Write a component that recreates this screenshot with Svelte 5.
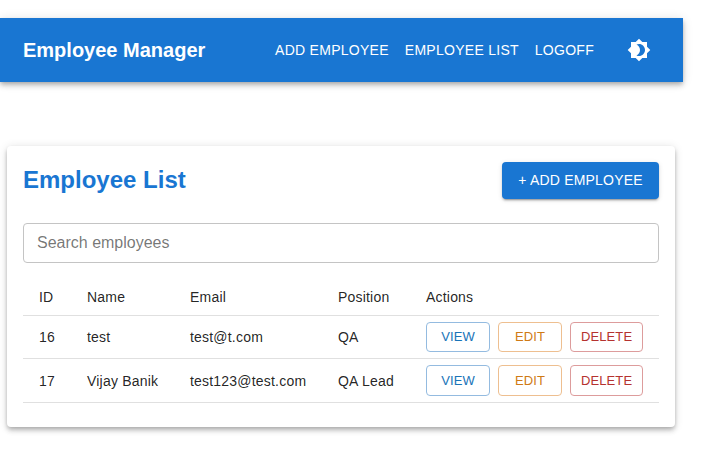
<script lang="ts">
	const employees = [
		{ id: 16, name: 'test', email: 'test@t.com', position: 'QA' },
		{ id: 17, name: 'Vijay Banik', email: 'test123@test.com', position: 'QA Lead' }
	];
	let search = '';
</script>

<div class="page">
	<header class="appbar">
		<div class="brand">Employee Manager</div>
		<nav class="nav">
			<a href="#add">Add Employee</a>
			<a href="#list">Employee List</a>
			<a href="#logoff">Logoff</a>
		</nav>
		<button class="theme" aria-label="Toggle theme">
			<svg viewBox="0 0 24 24" width="24" height="24" fill="currentColor">
				<path d="M20 8.69V4h-4.69L12 .69 8.69 4H4v4.69L.69 12 4 15.31V20h4.69L12 23.31 15.31 20H20v-4.69L23.31 12 20 8.69zM12 18c-.89 0-1.74-.2-2.5-.55C11.56 16.5 13 14.42 13 12s-1.44-4.5-3.5-5.45C10.26 6.2 11.11 6 12 6c3.31 0 6 2.69 6 6s-2.69 6-6 6z" />
			</svg>
		</button>
	</header>

	<main class="card">
		<div class="card-head">
			<h1>Employee List</h1>
			<button class="primary">+ Add Employee</button>
		</div>

		<input class="search" type="text" placeholder="Search employees" bind:value={search} />

		<table>
			<colgroup>
				<col class="c-id" />
				<col class="c-name" />
				<col class="c-email" />
				<col class="c-pos" />
				<col />
			</colgroup>
			<thead>
				<tr>
					<th>ID</th>
					<th>Name</th>
					<th>Email</th>
					<th>Position</th>
					<th>Actions</th>
				</tr>
			</thead>
			<tbody>
				{#each employees as emp}
					<tr>
						<td>{emp.id}</td>
						<td>{emp.name}</td>
						<td>{emp.email}</td>
						<td>{emp.position}</td>
						<td class="actions">
							<div class="action-row">
								<button class="outline view">View</button>
								<button class="outline edit">Edit</button>
								<button class="outline del">Delete</button>
							</div>
						</td>
					</tr>
				{/each}
			</tbody>
		</table>
	</main>
</div>

<style>
	:global(body) {
		margin: 0;
		background: #fff;
		font-family: 'Liberation Sans', Arial, sans-serif;
		color: rgba(0, 0, 0, 0.87);
	}

	.page {
		width: 683px;
		height: 453px;
		box-sizing: border-box;
		padding-top: 18px;
	}

	.appbar {
		display: flex;
		align-items: center;
		height: 64px;
		padding: 0 24px 0 23px;
		box-sizing: border-box;
		background: #1976d2;
		color: #fff;
		box-shadow:
			0 2px 4px -1px rgba(0, 0, 0, 0.2),
			0 4px 5px 0 rgba(0, 0, 0, 0.14),
			0 1px 10px 0 rgba(0, 0, 0, 0.12);
	}

	.brand {
		font-size: 20px;
		font-weight: 700;
		flex: 1;
	}

	.nav {
		display: flex;
		gap: 16px;
		margin-right: 25px;
	}

	.nav a {
		color: #fff;
		text-decoration: none;
		text-transform: uppercase;
		font-size: 14px;
		line-height: 20px;
		letter-spacing: 0.27px;
	}

	.theme {
		display: flex;
		padding: 8px;
		border: 0;
		background: none;
		color: #fff;
	}

	.card {
		width: 668px;
		margin: 64px 0 0 7px;
		padding: 16px 16px 24px;
		box-sizing: border-box;
		background: #fff;
		border-radius: 4px;
		box-shadow:
			0 2px 4px -1px rgba(0, 0, 0, 0.2),
			0 4px 5px 0 rgba(0, 0, 0, 0.14),
			0 1px 10px 0 rgba(0, 0, 0, 0.12);
	}

	.card-head {
		display: flex;
		justify-content: space-between;
		align-items: center;
	}

	h1 {
		margin: 0 0 1px;
		font-size: 24px;
		line-height: 35px;
		font-weight: 700;
		color: #1976d2;
	}

	button {
		font-family: inherit;
		cursor: pointer;
	}

	.primary {
		height: 36.6px;
		width: 157px;
		padding: 0 0 1px;
		border: 0;
		border-radius: 4px;
		background: #1976d2;
		color: #fff;
		font-size: 14px;
		letter-spacing: 0.2px;
		text-transform: uppercase;
		box-shadow:
			0 3px 1px -2px rgba(0, 0, 0, 0.2),
			0 2px 2px 0 rgba(0, 0, 0, 0.14),
			0 1px 5px 0 rgba(0, 0, 0, 0.12);
	}

	.search {
		display: block;
		width: 100%;
		height: 40px;
		margin-top: 24px;
		padding: 0 13px;
		box-sizing: border-box;
		border: 1px solid #c4c4c4;
		border-radius: 4px;
		font-family: inherit;
		font-size: 16px;
		color: rgba(0, 0, 0, 0.87);
	}

	.search::placeholder {
		color: rgba(0, 0, 0, 0.55);
		opacity: 1;
	}

	table {
		width: 100%;
		margin-top: 16px;
		border-collapse: collapse;
		table-layout: fixed;
		font-size: 14px;
		letter-spacing: 0.2px;
	}

	.c-id { width: 48px; }
	.c-name { width: 103px; }
	.c-email { width: 148px; }
	.c-pos { width: 88px; }

	th, td {
		padding: 6px 16px;
		text-align: left;
		font-weight: 400;
		line-height: 20px;
		border-bottom: 1px solid #e0e0e0;
		white-space: nowrap;
	}

	th {
		padding: 8px 16px;
	}

	.actions {
		padding-right: 0;
	}

	.action-row {
		display: flex;
		gap: 8px;
	}

	.outline {
		box-sizing: border-box;
		height: 30.75px;
		min-width: 64px;
		padding: 0 10px;
		background: none;
		border: 1px solid;
		border-radius: 4px;
		font-size: 13px;
		letter-spacing: 0.1px;
		text-transform: uppercase;
	}

	.view { color: #1a74b8; border-color: #94bbe0; }
	.edit { color: #cf7a16; border-color: #eebf90; }
	.del { color: #b5322f; border-color: #dd9c9c; }
</style>
